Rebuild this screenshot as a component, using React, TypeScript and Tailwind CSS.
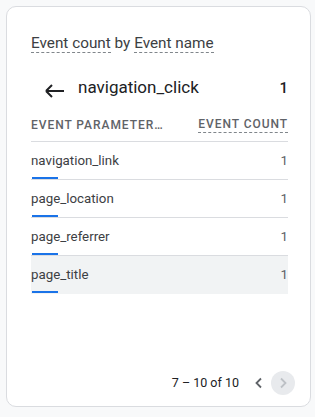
export default function App() {
    const rows = [
        { name: "navigation_link", count: "1" },
        { name: "page_location", count: "1" },
        { name: "page_referrer", count: "1" },
        { name: "page_title", count: "1", active: true },
    ];

    return (
        <div className="w-[315px] h-[417px] bg-[#f8f9fa] pt-[6px] pl-[6px] font-['Roboto',sans-serif]">
            <div className="w-[305px] h-[401px] bg-white border border-[#dadce0] rounded-[10px] pl-[24px] pr-[22px] pt-[26px] flex flex-col">
                {/* card title */}
                <div className="text-[15.3px] leading-[20px] text-[#3c4043]">
                    <span className="border-b border-dashed border-[#80868b]">Event count</span>
                    <span> by </span>
                    <span className="border-b border-dashed border-[#80868b]">Event name</span>
                </div>

                <div className="flex items-center mt-[22px] h-[26px]">
                    <svg className="ml-[14px] mt-[6px]" width="20" height="14" viewBox="0 0 20 14">
                        <path d="M1 7h18M1 7l6-6M1 7l6 6" stroke="#202124" strokeWidth="2" fill="none" />
                    </svg>
                    <span className="ml-[13px] text-[17px] text-[#202124] flex-1">navigation_click</span>
                    <span className="text-[15px] text-[#202124] font-medium">1</span>
                </div>

                {/* table header */}
                <div className="flex items-center justify-between mt-[15px] text-[12px] leading-[16px] tracking-[0.95px] text-[#5f6368] font-medium">
                    <span>EVENT PARAMETER…</span>
                    <span className="border-b border-dashed border-[#80868b]">EVENT COUNT</span>
                </div>
                <div className="mt-[8px] border-b border-[#dadce0]" />

                {rows.map((row, index) => (
                    <div
                        key={index}
                        className={`h-[38px] flex flex-col border-b ${row.active ? "bg-[#f1f3f4] border-transparent" : "border-[#dadce0]"}`}
                    >
                        <div className="flex items-center justify-between pt-[10px] text-[13.3px] leading-[18px] text-[#3c4043]">
                            <span>{row.name}</span>
                            <span className="text-[#5f6368]">{row.count}</span>
                        </div>
                        <div className="mt-auto ml-[1px] w-[26px] h-[2px] bg-[#1a73e8]" />
                    </div>
                ))}

                {/* pager */}
                <div className="mt-auto mb-[11px] mr-[-7px] flex items-center justify-end text-[12.5px] text-[#202124]">
                    <span>7 – 10 of 10</span>
                    <svg className="ml-[14px]" width="12" height="12" viewBox="0 0 12 12">
                        <path d="M8 1.5L3.5 6L8 10.5" stroke="#5f6368" strokeWidth="1.8" fill="none" />
                    </svg>
                    <div className="ml-[6px] w-[24px] h-[24px] rounded-full bg-[#e8eaed] flex items-center justify-center">
                        <svg width="12" height="12" viewBox="0 0 12 12">
                            <path d="M4 1.5L8.5 6L4 10.5" stroke="#bdc1c6" strokeWidth="1.8" fill="none" />
                        </svg>
                    </div>
                </div>
            </div>
        </div>
    );
}
